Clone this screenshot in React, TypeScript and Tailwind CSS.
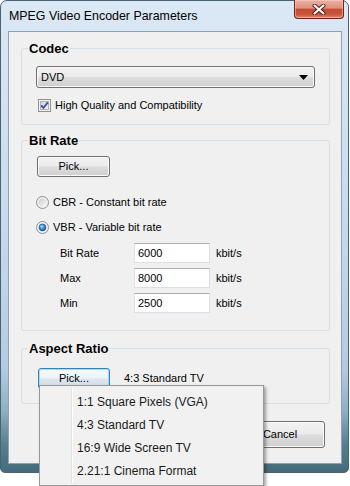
import React from "react";

const btnBg =
  "border border-[#707070] rounded-[3px] bg-[linear-gradient(180deg,#f2f2f2_0%,#ebebeb_48%,#dddddd_52%,#cfcfcf_100%)] shadow-[inset_0_0_0_1px_#fbfbfb]";

const Button: React.FC<{ className?: string; focused?: boolean; children?: React.ReactNode }> = ({
  className,
  focused,
  children,
}) => (
  <div
    className={
      "flex items-center justify-center " +
      (focused
        ? "border border-[#3c7fb1] rounded-[3px] bg-[linear-gradient(180deg,#f6fafd_0%,#edf3f8_48%,#dde6ee_52%,#d2dce5_100%)] shadow-[inset_0_0_0_1px_#9fdcf6] "
        : btnBg + " ") +
      (className || "")
    }
  >
    {children}
  </div>
);

const CheckBox = () => (
  <svg width="13" height="13" viewBox="0 0 13 13">
    <defs>
      <linearGradient id="cbg" x1="0" y1="0" x2="1" y2="1">
        <stop offset="0" stopColor="#cbcfd5" />
        <stop offset="1" stopColor="#f7f7f7" />
      </linearGradient>
    </defs>
    <rect x="0.5" y="0.5" width="12" height="12" fill="#f4f4f4" stroke="#8e8f8f" />
    <rect x="2.5" y="2.5" width="8" height="8" fill="url(#cbg)" stroke="#aeb3b9" />
    <path d="M3.2 6.4 L5.4 8.9 L9.9 3.4" fill="none" stroke="#3d51a0" strokeWidth="1.8" />
  </svg>
);

const Radio: React.FC<{ checked?: boolean }> = ({ checked }) => (
  <svg width="13" height="13" viewBox="0 0 13 13">
    <defs>
      <linearGradient id="rbg" x1="0" y1="0" x2="1" y2="1">
        <stop offset="0" stopColor="#c9ccd1" />
        <stop offset="1" stopColor="#f8f8f8" />
      </linearGradient>
      <radialGradient id="rdot" cx="0.4" cy="0.35" r="0.7">
        <stop offset="0" stopColor="#b6e6ff" />
        <stop offset="0.45" stopColor="#3a96e0" />
        <stop offset="1" stopColor="#14539e" />
      </radialGradient>
    </defs>
    <circle cx="6.5" cy="6.5" r="6" fill="#f2f2f2" stroke="#8e8f8f" />
    <circle cx="6.5" cy="6.5" r="4.2" fill="url(#rbg)" />
    {checked && <circle cx="6.5" cy="6.5" r="3.4" fill="url(#rdot)" stroke="#1b4f8c" strokeWidth="0.6" />}
  </svg>
);

const Group: React.FC<{ title: string; className: string; children?: React.ReactNode }> = ({
  title,
  className,
  children,
}) => (
  <div className={"relative ml-[12px] w-[309px] border border-[#d5dfe5] rounded-[3px] flex flex-col " + className}>
    <span className="absolute left-[6px] top-[-8px] px-[1px] bg-[#f0f0f0] font-bold text-[13px] leading-[15px]">
      {title}
    </span>
    {children}
  </div>
);

const RateRow: React.FC<{ label: string; value: string }> = ({ label, value }) => (
  <div className="flex items-center h-[20px]">
    <span className="ml-[38px] w-[74px]">{label}</span>
    <div className="w-[76px] h-[20px] bg-white border border-[#dbdfe6] border-t-[#abadb3] border-l-[#e2e3ea] flex items-center pl-[3px]">
      {value}
    </div>
    <span className="ml-[6px]">kbit/s</span>
  </div>
);

const items = ["1:1 Square Pixels (VGA)", "4:3 Standard TV", "16:9 Wide Screen TV", "2.21:1 Cinema Format"];

export default function App() {
  return (
    <div className="relative w-[350px] h-[486px] bg-white overflow-hidden font-['Liberation_Sans',Arial,sans-serif] text-[11px] text-black">
      {/* window frame */}
      <div className="flex flex-col w-[349px] h-[473px] rounded-t-[7px] rounded-b-[5px] border border-[#4a6373] bg-[linear-gradient(180deg,#dbe8f5_0%,#c8dbee_45%,#b3cbe2_78%,#8eb0c3_87%,#587f8f_94%,#436b7a_100%)]">
        <div className="flex h-[30px] items-start">
          <span className="mt-[8px] ml-[8px] text-[12.4px] leading-[14px] text-black">
            MPEG Video Encoder Parameters
          </span>
          <div className="ml-auto mr-[4px] -mt-px w-[50px] h-[19px] rounded-b-[4px] border border-[#6a2419] border-t-0 bg-[linear-gradient(180deg,#ebb3a6_0%,#dd8f7e_45%,#c54a32_52%,#c9553b_80%,#de8a6c_100%)] shadow-[inset_0_0_0_1px_rgba(255,210,200,0.5)] flex items-center justify-center">
            <svg width="14" height="11" viewBox="0 0 14 11">
              <path d="M2.5 1.5 L11.5 9.5 M11.5 1.5 L2.5 9.5" stroke="#4b1a13" strokeWidth="4" strokeLinecap="round" />
              <path d="M2.5 1.5 L11.5 9.5 M11.5 1.5 L2.5 9.5" stroke="#ffffff" strokeWidth="2.2" strokeLinecap="round" />
            </svg>
          </div>
        </div>

        {/* client area */}
        <div className="ml-[7px] w-[334px] h-[433px] border border-[#8da3b5] bg-[#f0f0f0] flex flex-col">
          <Group title="Codec" className="mt-[16px] h-[77px] pt-[17px]">
            <div className={"relative ml-[14px] w-[279px] h-[22px] flex items-center pl-[4px] " + btnBg}>
              DVD
              <svg className="absolute right-[6px] top-[8px]" width="9" height="5" viewBox="0 0 9 5">
                <path d="M0 0 H9 L4.5 5 Z" fill="#000" />
              </svg>
            </div>
            <div className="mt-[11px] ml-[16px] h-[13px] flex items-center gap-[4px]">
              <CheckBox />
              <span>High Quality and Compatibility</span>
            </div>
          </Group>

          <Group title="Bit Rate" className="mt-[15px] h-[191px] pt-[15px]">
            <Button className="ml-[15px] w-[73px] h-[21px]">Pick...</Button>
            <div className="mt-[19px] ml-[14px] h-[13px] flex items-center gap-[4px]">
              <Radio />
              <span>CBR - Constant bit rate</span>
            </div>
            <div className="mt-[12px] ml-[14px] h-[13px] flex items-center gap-[4px]">
              <Radio checked />
              <span>VBR - Variable bit rate</span>
            </div>
            <div className="mt-[9px] flex flex-col gap-[5px]">
              <RateRow label="Bit Rate" value="6000" />
              <RateRow label="Max" value="8000" />
              <RateRow label="Min" value="2500" />
            </div>
          </Group>

          <Group title="Aspect Ratio" className="mt-[17px] h-[56px] pt-[19px]">
            <div className="flex items-center">
              <Button focused className="ml-[16px] w-[72px] h-[21px]">
                Pick...
              </Button>
              <span className="ml-[14px]">4:3 Standard TV</span>
            </div>
          </Group>

          <div className="mt-[17px] flex justify-end gap-[6px] pr-[16px]">
            <Button className="w-[90px] h-[27px]">OK</Button>
            <Button className="w-[90px] h-[27px]">Cancel</Button>
          </div>
        </div>
      </div>

      {/* popup menu */}
      <div className="absolute left-[39px] top-[385px] w-[225px] h-[101px] border border-[#979797] bg-[#f1f1f1] shadow-[2px_2px_3px_rgba(0,0,0,0.35)] pt-[4px] text-[12px]">
        <div className="absolute left-[31px] top-[2px] bottom-[2px] w-px bg-[#e2e3e3]" />
        <div className="absolute left-[32px] top-[2px] bottom-[2px] w-px bg-white" />
        {items.map((t) => (
          <div key={t} className="relative h-[23px] pl-[37px] flex items-center text-[#1a1a1a]">
            {t}
          </div>
        ))}
      </div>
    </div>
  );
}
